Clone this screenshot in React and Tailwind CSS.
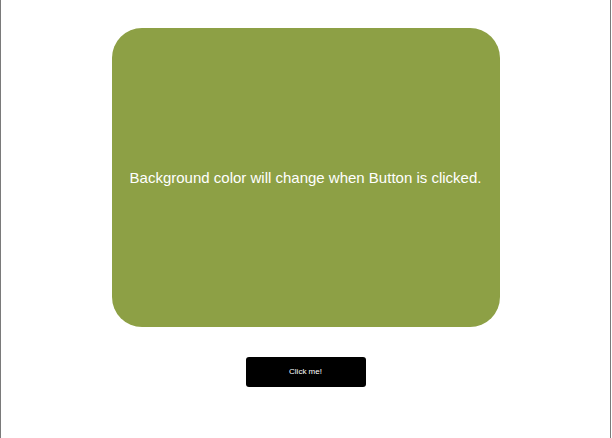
export default function App() {
  return (
    <div
      className="w-[611px] h-[438px] border-x border-[#7a7a7a] bg-white flex flex-col items-center"
      style={{ fontFamily: '"Liberation Sans", Arial, sans-serif' }}
    >
      <div className="mt-[28px] w-[388px] h-[299px] rounded-[30px] bg-[#8da045] flex items-center justify-center">
        <p className="text-[15px] text-white leading-none">
          Background color will change when Button is clicked.
        </p>
      </div>
      <button className="mt-[30px] w-[120px] h-[30px] rounded-[3px] bg-black text-white text-[8px] flex items-center justify-center">
        Click me!
      </button>
    </div>
  );
}
